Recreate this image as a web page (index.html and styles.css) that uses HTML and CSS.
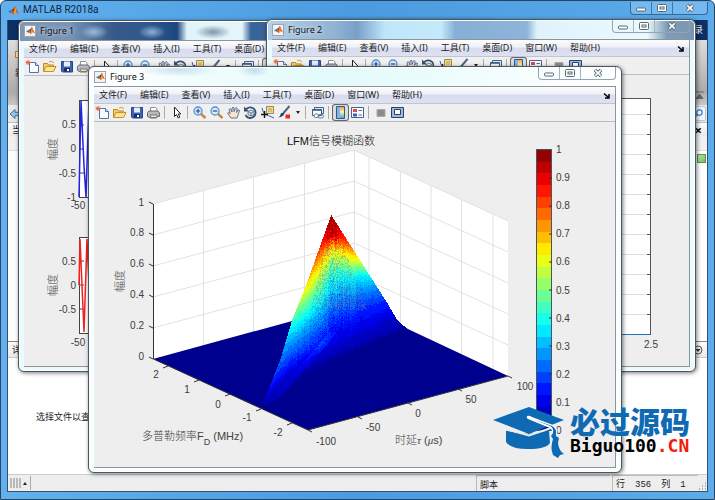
FILE: index.html
```html
<!DOCTYPE html>
<html lang="zh-CN">
<head>
<meta charset="utf-8">
<title>MATLAB R2018a</title>
<link rel="stylesheet" href="styles.css">
</head>
<body>
<svg class="defs" aria-hidden="true">
  <linearGradient id="jetbar" x1="0" y1="0" x2="0" y2="1"><stop offset="0" stop-color="#f39a5a"/><stop offset=".45" stop-color="#fff59a"/><stop offset="1" stop-color="#4aa3df"/></linearGradient>
  <symbol id="i-logo" viewBox="0 0 12 12"><path d="M0 7 4 5 6 7 3 9Z" fill="#3d7fb8"/><path d="M3 9 6 5 8 1 9 4 12 10 9 8 6 11 5 9Z" fill="#d9541e"/><path d="M4 5 6 4 8 1 6 7Z" fill="#6b3a3a"/><path d="M8 1 9 8 6 11Z" fill="#f7a12c"/></symbol>
  <symbol id="i-new" viewBox="0 0 15 15"><path d="M4.500 3.500h6l3 3v7h-9z" fill="#f8fbff" stroke="#4f74a8"/><path d="M10.500 3.500v3h3" fill="#cfe0f4" stroke="#4f74a8"/><path d="M3 1v5M.5 3.500h5M1.200 1.700l3.600 3.600M4.800 1.700 1.200 5.300" stroke="#e8603a"/></symbol>
  <symbol id="i-open" viewBox="0 0 15 15"><path d="M1.500 12.500v-8h4l1 1.500h5v2" fill="#f3cf6b" stroke="#b98a25"/><path d="M1.500 12.500 4 7.500h10l-2.500 5z" fill="#ffe48f" stroke="#c3922d"/><path d="M7 3q3-2 5 1" fill="none" stroke="#d99a2b"/></symbol>
  <symbol id="i-save" viewBox="0 0 15 15"><path d="M2.500 2.500h11v10.500h-10l-1-1z" fill="#3e62b4" stroke="#25458d"/><path d="M5 2.500h6v5H5z" fill="#e4edfb"/><path d="M5 9h6v3.500H5z" fill="#172e60"/><path d="M8 10h2v2H8z" fill="#fff"/></symbol>
  <symbol id="i-print" viewBox="0 0 15 15"><path d="M4.500 7V2.500h5L11 4v3" fill="#fff" stroke="#8b8f98"/><path d="M1.500 7.500 3 6h9l1.500 2v3.500h-3V13h-6l-3-1.500z" fill="#b7bac3" stroke="#686d78"/><path d="M4 10h7v2.500H5z" fill="#f6e7b5" stroke="#777"/></symbol>
  <symbol id="i-ptr" viewBox="0 0 15 15"><path d="M5.500 2v9.500l2-2 1.700 3.500 1.600-.8L9.200 9h2.500z" fill="#fff" stroke="#222"/></symbol>
  <symbol id="i-zin" viewBox="0 0 15 15"><path d="m8 8 5.500 5" stroke="#c08a45" stroke-width="2.400"/><circle cx="6" cy="6" r="4" fill="#d6eafb" stroke="#5a93cc" stroke-width="1.300"/><path d="M6 3.800v4.400M3.800 6h4.400" stroke="#1c4c96" stroke-width="1.200"/></symbol>
  <symbol id="i-zout" viewBox="0 0 15 15"><path d="m8 8 5.500 5" stroke="#c08a45" stroke-width="2.400"/><circle cx="6" cy="6" r="4" fill="#d6eafb" stroke="#5a93cc" stroke-width="1.300"/><path d="M3.800 6h4.400" stroke="#1c4c96" stroke-width="1.200"/></symbol>
  <symbol id="i-pan" viewBox="0 0 15 15"><path d="M5 13 1.500 8.200q1-1.500 2.700.4L3 4.500q1-1.500 2 0L6 7V3q1-1.500 2 0v3.600L9.500 3q1.400-1 1.700.5L10.500 7.500 12 5q1.600-.5 1.400 1L11 13z" fill="#fbe3c6" stroke="#4b679c" stroke-width=".9"/></symbol>
  <symbol id="i-rot" viewBox="0 0 15 15"><path d="M3 4.500A5.300 5.300 0 1 1 2.500 10" fill="none" stroke="#36516f" stroke-width="1.800"/><path d="M1 1.500v5h5z" fill="#36516f"/><path d="M5 6.500 8 5l3 1.500v3L8 11 5 9.500zM5 6.500 8 8l3-1.500M8 8v3" fill="#d9e4ef" stroke="#57728e" stroke-width=".9"/></symbol>
  <symbol id="i-cur" viewBox="0 0 15 15"><path d="M6.500 1.500h7v7h-7z" fill="#f3dc92" stroke="#9b8748"/><path d="M8 4h4M8 6h4" stroke="#b6a063"/><path d="M2 3q1 5 3 6t9 4" fill="none" stroke="#3c52e0"/><path d="M4.500 6v7M1 9.500h7" stroke="#111" stroke-width="1.400"/></symbol>
  <symbol id="i-brush" viewBox="0 0 15 15"><path d="m12.500 1-6 7" stroke="#4b6787" stroke-width="2"/><path d="M7.500 7.500Q7 12 1 12.500q2.500-1 2.500-3T7.500 7.500" fill="#29445f"/><path d="M8.500 9.500h4.500v4H8.500z" fill="#fa2414"/></symbol>
  <symbol id="i-link" viewBox="0 0 15 15"><path d="M4.500 2.500h9v6h-9z" fill="#e4edf6" stroke="#3e5f86"/><path d="M2.500 4.500h9v6h-9z" fill="#f7fafd" stroke="#3e5f86"/><path d="M2.500 5h9" stroke="#3e5f86" stroke-width="1.600"/><rect x="4" y="9" width="5" height="3.500" rx="1.700" fill="#fff" stroke="#61798f"/><rect x="8" y="9.500" width="5.500" height="3.500" rx="1.700" fill="none" stroke="#61798f"/></symbol>
  <symbol id="i-cbar" viewBox="0 0 15 15"><path d="M3.500 1.500h8v12h-8z" fill="#fff" stroke="#2f598c"/><path d="M4 2h3v11H4z" fill="#83b6e3"/><path d="M7 2h4v11H7z" fill="url(#jetbar)"/></symbol>
  <symbol id="i-leg" viewBox="0 0 15 15"><path d="M1.500 2.500h12v10h-12z" fill="#f8faff" stroke="#48638d"/><path d="M3 4h4v3H3z" fill="#e34a3e"/><path d="M3 8.500h4v3H3z" fill="#4058c9"/><path d="M8.500 5.500H12M8.500 10H12" stroke="#5c6e86"/></symbol>
  <symbol id="i-hide" viewBox="0 0 15 15"><path d="M4 4.500h8v7H4z" fill="#8c8c8c" stroke="#a9a9a9"/></symbol>
  <symbol id="i-show" viewBox="0 0 15 15"><path d="M1.500 2.500h12v10h-12z" fill="#9db9db" stroke="#26436e"/><path d="M4.500 4.500h6v5h-6z" fill="#fff" stroke="#26436e"/></symbol>
  <symbol id="w-min" viewBox="0 0 14 10"><rect x="2.500" y="5" width="9" height="3" rx="1" fill="#fff" stroke="#596773"/></symbol>
  <symbol id="w-max" viewBox="0 0 14 10"><rect x="2.500" y="1.500" width="9" height="7" rx="1" fill="#fff" stroke="#596773"/><rect x="5" y="4" width="4" height="2" fill="#fff" stroke="#596773"/></symbol>
  <symbol id="w-close" viewBox="0 0 14 10"><path d="m4 2 6 6M10 2 4 8" stroke="#596773" stroke-width="3.500"/><path d="m4.300 2.300 5.400 5.400M9.700 2.300 4.300 7.700" stroke="#fff" stroke-width="1.700"/></symbol>
</svg>

<template id="window-controls">
  <div class="controls">
    <button aria-label="最小化"><svg><use href="#w-min"/></svg></button>
    <button aria-label="最大化"><svg><use href="#w-max"/></svg></button>
    <button class="close" aria-label="关闭"><svg><use href="#w-close"/></svg></button>
  </div>
</template>

<template id="figure-bars">
  <nav class="menubar">
    <button>文件(F)</button><button>编辑(E)</button><button>查看(V)</button><button>插入(I)</button><button>工具(T)</button><button>桌面(D)</button><button>窗口(W)</button><button>帮助(H)</button>
    <svg class="dock" viewBox="0 0 7 7"><path d="M1 1.500 5 5M6 2v4H2" fill="none" stroke="#000" stroke-width="1.500"/></svg>
  </nav>
  <div class="toolbar">
    <button aria-label="新建"><svg><use href="#i-new"/></svg></button>
    <button aria-label="打开"><svg><use href="#i-open"/></svg></button>
    <button aria-label="保存"><svg><use href="#i-save"/></svg></button>
    <button aria-label="打印"><svg><use href="#i-print"/></svg></button>
    <i></i>
    <button aria-label="编辑绘图"><svg><use href="#i-ptr"/></svg></button>
    <i></i>
    <button aria-label="放大"><svg><use href="#i-zin"/></svg></button>
    <button aria-label="缩小"><svg><use href="#i-zout"/></svg></button>
    <button aria-label="平移"><svg><use href="#i-pan"/></svg></button>
    <button aria-label="旋转"><svg><use href="#i-rot"/></svg></button>
    <button aria-label="数据游标"><svg><use href="#i-cur"/></svg></button>
    <button aria-label="刷亮"><svg><use href="#i-brush"/></svg></button>
    <button class="drop" aria-label="刷亮选项"></button>
    <i></i>
    <button aria-label="链接"><svg><use href="#i-link"/></svg></button>
    <i></i>
    <button class="pressed" aria-label="颜色栏"><svg><use href="#i-cbar"/></svg></button>
    <button aria-label="图例"><svg><use href="#i-leg"/></svg></button>
    <i></i>
    <button aria-label="隐藏绘图工具"><svg><use href="#i-hide"/></svg></button>
    <button aria-label="显示绘图工具"><svg><use href="#i-show"/></svg></button>
  </div>
</template>

<div class="app">
  <header class="app-title"><svg class="logo"><use href="#i-logo"/></svg><h1>MATLAB R2018a</h1><span data-controls></span></header>
  <main class="app-body">
    <div class="tabs"><span>登录</span></div>
    <div class="ribbon">
      <div class="ribbon-item"><span class="ribbon-icon"></span><span>新建</span></div>
      <svg class="collapse" viewBox="0 0 9 9"><path d="M0 1h9M1 7.500 4.500 3 8 7.500z" fill="#666" stroke="#666"/></svg>
    </div>
    <div class="address">
      <svg class="back" viewBox="0 0 12 12"><path d="M1 6 6 1.500v2.800h6v3.400H6v2.800z" fill="#9cc6e8" stroke="#39749f"/></svg>
      <button class="search" aria-label="搜索"><svg viewBox="0 0 10 10"><circle cx="6" cy="4" r="3" fill="#fff" stroke="#2a7bd0" stroke-width="1.300"/><path d="M4 6 1 9" stroke="#2a7bd0" stroke-width="1.500"/></svg></button>
    </div>
    <div class="panel-head"><span>当前文件夹</span><b>×</b></div>
    <div class="files"><span class="column"></span><span class="ok"></span></div>
    <div class="panel-head details"><span>详细信息</span><svg viewBox="0 0 10 10"><circle cx="5" cy="5" r="4" fill="#eee" stroke="#555"/><path d="M2.500 4h5L5 7z" fill="#333"/></svg></div>
    <div class="preview">选择文件以查看详细信息</div>
    <footer class="status">
      <svg class="grip" viewBox="0 0 20 12"><path d="M1 1v10M4 1v10M7 1v10M10 1v10" stroke="#a9a9a9" stroke-width="1.500"/><path d="m13 8 2-3 2 3z" fill="#222"/></svg>
      <span class="mode">脚本</span>
      <span class="caret"><span>行</span><span>356</span><span>列</span><span>1</span></span>
      <svg class="corner" viewBox="0 0 9 9"><path d="M7 1h1M7 4h1M7 7h1M4 4h1M4 7h1M1 7h1" stroke="#999" stroke-width="1.500"/></svg>
    </footer>
  </main>
</div>

<section class="figure fig1">
  <header class="fig-title"><span class="badge"><svg class="logo"><use href="#i-logo"/></svg></span><h2>Figure 1</h2></header>
  <div class="client" data-bars>
    <svg class="plot" viewBox="0 0 464 292">
      <rect x="55.500" y="24.500" width="360" height="97" fill="#fff" stroke="#444"/>
      <path d="M56 49h4M56 73h4M56 97h4" stroke="#444"/>
      <path d="M55 121 57 25 60 90 62 121 65 25 67 60 70 121" fill="none" stroke="#2222e8" stroke-width="1.500"/>
      <g class="tick end"><text x="52" y="52">0.5</text><text x="52" y="76">0</text><text x="52" y="101">-0.5</text><text x="52" y="125">-1</text></g>
      <text class="tick mid" x="54" y="133">-50</text>
      <text class="axis mid" transform="translate(33 73) rotate(-90)">幅度</text>
      <rect x="55.500" y="161.500" width="360" height="96" fill="#fff" stroke="#444"/>
      <path d="M56 185h4M56 209h4M56 233h4" stroke="#444"/>
      <path d="M55 209 56 163 60 256 63 163 67 256" fill="none" stroke="#f42020" stroke-width="1.500"/>
      <g class="tick end"><text x="52" y="189">0.5</text><text x="52" y="213">0</text><text x="52" y="237">-0.5</text></g>
      <text class="tick mid" x="54" y="270">-50</text>
      <text class="axis mid" transform="translate(33 209) rotate(-90)">幅度</text>
    </svg>
  </div>
</section>

<section class="figure fig2">
  <header class="fig-title"><span class="badge"><svg class="logo"><use href="#i-logo"/></svg></span><h2>Figure 2</h2><span data-controls></span></header>
  <div class="client" data-bars>
    <svg class="plot" viewBox="0 -1 417 292">
      <rect x="55.500" y="22.500" width="323" height="236" fill="#fff" stroke="#555"/>
      <path d="M56 38.500h322M56 58.500h322M56 78.500h322M56 98.500h322M56 118.500h322M56 138.500h322M56 158.500h322M56 178.500h322M56 198.500h322M56 218.500h322M56 238.500h322" stroke="#dedede"/>
      <path d="M375 38.500h4M375 58.500h4M375 78.500h4M375 98.500h4M375 118.500h4M375 138.500h4M375 158.500h4M375 178.500h4M375 198.500h4M375 218.500h4M375 238.500h4" stroke="#555"/>
      <path d="M56 258.500h322" stroke="#1874c8"/>
      <text class="tick mid" x="379" y="272">2.5</text>
    </svg>
  </div>
</section>

<section class="figure fig3">
  <header class="fig-title"><span class="badge"><svg class="logo"><use href="#i-logo"/></svg></span><h2>Figure 3</h2><span data-controls></span></header>
  <div class="client" data-bars>
    <svg class="plot" viewBox="94 122 521 345">
      <text class="heading mid" x="331" y="145">LFM信号模糊函数</text>
      <path d="M153 204 354 150 508 221V376L354 305 153 359Z" fill="#fff"/>
      <path d="M153 204 354 150 508 221M153 235 354 181 508 252M153 266 354 212 508 283M153 297 354 243 508 314M153 328 354 274 508 345M203.500 191V345M253.500 177V332M304.500 163V318M354.500 150V305M369 157V312M400.500 171V326M431 186V340M461.500 200V354M493 214V369" fill="none" stroke="#e2e2e2"/>
      <path d="M153 359 303 318 354 305 393 318 402 326 410 330 508 376 308 430Z" fill="#00008f"/>
      <g id="surface" shape-rendering="crispEdges"></g>
      <path d="M153.500 204V359L308 430 508 376" fill="none" stroke="#333"/>
      <path d="M149 202l4 2M149 233l4 2M149 264l4 2M149 295l4 2M149 326l4 2M149 357l4 2M168 366l-5 2M199 380l-5 2M230 394l-5 2M261 409l-5 2M292 423l-5 2M308 430l4 2M358 417l4 2M408 403l4 2M458 389l4 2M508 376l4 2" stroke="#333"/>
      <g class="tick end"><text x="144" y="206">1</text><text x="144" y="236">0.8</text><text x="144" y="267">0.6</text><text x="144" y="298">0.4</text><text x="144" y="329">0.2</text><text x="144" y="360">0</text></g>
      <g class="tick mid"><text x="156" y="378">2</text><text x="187" y="393">1</text><text x="218" y="408">0</text><text x="247" y="421">-1</text><text x="278" y="436">-2</text><text x="326" y="445">-100</text><text x="373" y="431">-50</text><text x="418" y="417">0</text><text x="471" y="403">50</text><text x="525" y="390">100</text></g>
      <text class="axis mid" transform="translate(124 281) rotate(-90)">幅度</text>
      <text class="axis" x="142" y="440">多普勒频率<tspan>F</tspan><tspan class="sub" dy="5">D</tspan><tspan dy="-5"> (MHz)</tspan></text>
      <text class="axis" x="395" y="444">时延<tspan class="greek">τ</tspan> (<tspan class="greek">μ</tspan>s)</text>
      <g id="colorbar" shape-rendering="crispEdges"></g>
      <rect x="536.500" y="149.500" width="15" height="281" fill="none" stroke="#4b5560"/>
      <path d="M549 178h3M549 206h3M549 234h3M549 262h3M549 290h3M549 318h3M549 346h3M549 374h3M549 402h3" stroke="#333"/>
      <g class="tick"><text x="556" y="153">1</text><text x="556" y="181">0.9</text><text x="556" y="209">0.8</text><text x="556" y="237">0.7</text><text x="556" y="265">0.6</text><text x="556" y="294">0.5</text><text x="556" y="322">0.4</text><text x="556" y="350">0.3</text><text x="556" y="378">0.2</text><text x="556" y="406">0.1</text><text x="556" y="434">0</text></g>
    </svg>
  </div>
</section>

<aside class="brand">
  <svg viewBox="0 0 72 52"><path d="M13 23.500Q34 30 56 23l1 13q-4 6-22 6-17 0-22-7z" fill="#0f6ab4"/><path d="M0 13 36 0 71 13 36 27Z" fill="#0f6ab4"/><path d="M12 22 36 28.500 58 21" fill="none" stroke="#eee" stroke-width="2"/><path d="M34 9q2-1 5 1l21 8q5 2 4 10l-2 2-3-1q1-6-2-8L35 12q-2-1-1-3" fill="#fff"/><path d="M40 12 59 19q5 2 4 10l3 2-1 5q1 8 6 11l-4 1-2 3-5-3q-3-7 0-16l-2-3 2-3q1-5-3-7z" fill="#0f6ab4"/></svg>
  <div><strong>必过源码</strong><p>Biguo100<em>.CN</em></p></div>
</aside>
<script src="app.js"></script>
</body>
</html>
```
FILE: styles.css
```css
* { box-sizing: border-box; }
body { margin: 0; min-height: 100vh; position: relative; overflow: hidden; font: 9px/12px "Noto Sans", "Noto Sans CJK SC", sans-serif; color: #222; }
h1, h2, p { margin: 0; font-weight: 400; }
button { padding: 0; margin: 0; border: 0; background: none; font: inherit; color: inherit; }
svg { display: block; }
.defs { position: absolute; width: 0; height: 0; }

.app { min-height: 100vh; display: flex; flex-direction: column; padding: 1px 6px 7px; background: linear-gradient(90deg, #62b1ee, #4a9be0 50%, #5cabea); border: 1px solid #27435f; border-radius: 6px 6px 0 0; }
.app-title { height: 18px; display: flex; align-items: center; gap: 4px; padding: 0 0 2px 1px; }
.app-title h1 { flex: 1; font-size: 10px; font-family: Roboto, sans-serif; color: #10243a; }
.logo { width: 11px; height: 11px; }
.controls { display: flex; align-self: flex-start; height: 13px; border: 1px solid #91a5b4; border-top: 0; border-radius: 0 0 4px 4px; }
.controls button { width: 21px; display: flex; align-items: center; justify-content: center; border-right: 1px solid #a5b6c3; }
.controls .close { width: 34px; border: 0; }
.controls svg { width: 14px; height: 10px; }
.app .controls { border-color: #2f699c; background: #76b9ee; }
.app .controls button { border-color: #3b78ac; }
[data-controls] { align-self: flex-start; }

.app-body { flex: 1; display: flex; flex-direction: column; background: #fff; border: 1px solid #35506c; border-top: 0; }
.tabs { height: 20px; background: #0c2f66; color: #fff; display: flex; justify-content: flex-end; align-items: center; padding-right: 4px; }
.ribbon { height: 65px; display: flex; justify-content: space-between; align-items: flex-end; padding: 3px 3px 5px 7px; background: linear-gradient(#dedede, #ababab 80%, #c8c8c8); }
.ribbon-item { align-self: flex-start; margin-top: 8px; display: flex; flex-direction: column; gap: 9px; }
.ribbon-icon { width: 10px; height: 7px; border: 1px solid #c9792a; background: #f3dfb6; }
.collapse { width: 9px; height: 9px; }
.address { height: 17px; display: flex; justify-content: space-between; align-items: center; padding: 0 1px; background: #e9e9e9; }
.back { width: 12px; height: 12px; }
.search { width: 16px; height: 15px; display: flex; align-items: center; justify-content: center; border: 1px solid #b7c9dd; border-radius: 2px; background: #eef5fd; }
.search svg { width: 9px; height: 9px; }
.panel-head { height: 14px; display: flex; align-items: center; justify-content: space-between; padding: 0 5px 0 4px; background: linear-gradient(#fdfdfd, #e9e9e9); border-top: 1px solid #bbb; }
.panel-head b { font-size: 13px; color: #000; }
.files { flex: 1; display: flex; flex-direction: column; align-items: flex-end; gap: 3px; }
.column { width: 100%; height: 15px; background: #f1f1f1; border-bottom: 1px solid #ddd; }
.ok { width: 9px; height: 9px; margin-right: 1px; border: 1px solid #6b8a5c; background: linear-gradient(135deg, #b7e6a5, #6cc35b); }
.details { height: 16px; padding-right: 4px; border-top: 1px solid #888; }
.details svg { width: 10px; height: 10px; }
.preview { height: 117px; padding: 53px 0 0 28px; border-top: 1px solid #ccc; }
.status { height: 17px; display: flex; align-items: stretch; background: #eee; border-top: 1px solid #ccc; }
.grip { width: 23px; height: 14px; margin-top: 1px; padding-left: 2px; border-right: 1px solid #aaa; }
.mode { margin-left: auto; width: 134px; border: 1px solid #bbb; border-width: 1px 0 0 1px; padding: 3px 0 0 3px; }
.caret { width: 86px; margin-left: 2px; padding: 3px 0 0 3px; display: flex; gap: 10px; border: 1px solid #bbb; border-width: 1px 0 0 1px; font-family: "Liberation Mono", "Noto Sans CJK SC", monospace; }
.corner { width: 9px; height: 9px; align-self: flex-end; }

.figure { position: absolute; display: flex; flex-direction: column; padding: 0 5px 4px; border: 1px solid #4c565e; border-radius: 6px; background: #eafafd; box-shadow: inset 0 0 0 1px #fff, 1px 1px 4px #0008; }
.fig1 { top: 20px; left: 18px; right: 220px; bottom: 128px; background: radial-gradient(14px 7px at 75px 11px, #9cbcdc, transparent), radial-gradient(14px 7px at 133px 11px, #8fb0d4, transparent), radial-gradient(18px 7px at 194px 11px, #8296a5, transparent) , linear-gradient(90deg, #7e96b2 0, #7795b8 50px, #36598a 95px, #2f588c 130px, #1d4580 158px, #dff4fb 168px, #e4f6fb 223px, #38649a 232px) top / 100% 20px no-repeat, #eafafd; }
.fig2 { top: 19px; left: 266px; right: 19px; bottom: 128px; background: linear-gradient(90deg, #b6d1e8 0, #8fb2d3 70px, #789fc8 90px, #bee6fa 118px, #c4e9fa 174px, #87afd6 188px, #8db4d9 260px, #dff2fc 270px, #eafaff 380px, #7f9db8 400px, #7895b1) top / 100% 20px no-repeat, #eafafd; }
.fig3 { top: 66px; left: 88px; right: 93px; bottom: 27px; background: radial-gradient(16px 7px at 165px 3px, #bfdcec, transparent), radial-gradient(40px 7px at 90px 3px, #c9e3ee, transparent), linear-gradient(90deg, #fff, #e2fafa 45%, #f2fdfd 75%, #fff) top / 100% 21px no-repeat, #f8ffff; }
.fig-title { height: 19px; flex: none; display: flex; align-items: center; gap: 4px; }
.fig-title h2 { flex: 1; font-size: 9px; color: #111; text-shadow: 0 0 4px #fff; }
.badge { width: 12px; height: 12px; display: flex; align-items: center; justify-content: center; background: #f3f3f3; border: 1px solid #9aa7b2; }
.badge .logo { width: 9px; height: 9px; }
.client { flex: 1; min-height: 0; display: flex; flex-direction: column; background: #eee; border: 1px solid #8e9498; border-width: 1px 1px 1px 0; }
.menubar { height: 17px; flex: none; display: flex; align-items: center; gap: 13px; padding: 0 5px; background: linear-gradient(#fdfdfe, #edf0f8 45%, #d8dcee 50%, #dde2f2); border-bottom: 1px solid #c2c5ce; overflow: hidden; }
.menubar button { flex: none; white-space: nowrap; }
.dock { width: 7px; height: 7px; margin-left: auto; flex: none; }
.toolbar { height: 18px; flex: none; display: flex; align-items: center; gap: 2px; padding-left: 1px; border-bottom: 1px solid #bbb; background: #f0f0f0; overflow: hidden; }
.toolbar button { width: 15px; height: 15px; flex: none; }
.toolbar svg { width: 15px; height: 15px; }
.toolbar i { width: 1px; height: 13px; margin: 0 2px 0 1px; background: #aaa; flex: none; }
.toolbar .drop { width: 8px; display: flex; align-items: center; justify-content: center; }
.drop::after { content: ""; border: 2px solid transparent; border-top: 3px solid #222; border-bottom: 0; }
.toolbar .pressed { border-radius: 2px; background: #dcdcdc; box-shadow: 0 0 0 1px #666; }
.plot { flex: 1; min-height: 0; width: 100%; }
.fig1 .plot, .fig2 .plot { flex: none; height: auto; overflow: visible; }

.tick { font: 10px "Liberation Sans", sans-serif; fill: #3c3c3c; }
.axis { font: 300 11px "Liberation Sans", "Noto Sans CJK SC", sans-serif; fill: #444; }
.heading { font: 300 11px "Liberation Sans", "Noto Sans CJK SC", sans-serif; fill: #111; }
.end { text-anchor: end; }
.mid { text-anchor: middle; }
.sub { font-size: 9px; }
.greek { font-family: "Liberation Serif", serif; font-style: italic; }

.brand { position: absolute; left: 493px; top: 404px; display: flex; gap: 5px; }
.brand > svg { width: 72px; height: 52px; margin-top: 3px; }
.brand strong { display: block; font: 900 30px/32px "Noto Sans CJK SC", sans-serif; color: #0f6ab4; white-space: nowrap; }
.brand p { font: bold 18px/20px "DejaVu Sans Mono", monospace; color: #000; }
.brand em { font-style: normal; color: #f51a0a; }
```
FILE: app.js
```js
document.querySelectorAll('[data-controls]').forEach(el =>
  el.append(document.getElementById('window-controls').content.cloneNode(true)));
document.querySelectorAll('[data-bars]').forEach(el =>
  el.prepend(document.getElementById('figure-bars').content.cloneNode(true)));

const LEVELS = 24;
const channel = (v, c) => Math.round(255 * Math.max(0, Math.min(1, 1.5 - Math.abs(4 * v - c))));
const jet = v => `rgb(${channel(v, 3)},${channel(v, 2)},${channel(v, 1)})`;
const shade = i => jet((i + 0.5) / LEVELS);
const addShape = (parent, name, attrs) => {
  const el = document.createElementNS('http://www.w3.org/2000/svg', name);
  for (const key in attrs) el.setAttribute(key, attrs[key]);
  parent.append(el);
};

const bar = document.getElementById('colorbar');
for (let i = 0; i < LEVELS; i++) {
  const top = Math.round(430 - 280 * (i + 1) / LEVELS);
  addShape(bar, 'rect', { x: 537, y: top, width: 14, height: Math.round(430 - 280 * i / LEVELS) - top, fill: shade(i) });
}

// Piecewise linear lookup in a list of [position, value] pairs.
const lookup = (table, p) => {
  if (p <= table[0][0]) return table[0][1];
  for (let i = 1; i < table.length; i++) {
    const [a, va] = table[i - 1], [b, vb] = table[i];
    if (p <= b) return va + (vb - va) * (p - a) / (b - a);
  }
  return table[table.length - 1][1];
};
const leftEdge = [[215, 331], [285, 306], [320, 292], [360, 280], [405, 262]];
const rightEdge = [[215, 331], [262, 361], [303, 387], [320, 397], [326, 404], [330, 408], [356, 345], [405, 265]];
const leftValue = [[215, .99], [250, .82], [290, .62], [325, .4], [345, .28], [385, .13], [405, .04]];
const midValue = [[215, .99], [236, .92], [243, .78], [252, .6], [265, .48], [275, .4], [300, .26], [330, .13], [340, .1], [375, .04]];
const rightValue = [[215, .99], [240, .82], [252, .7], [262, .58], [275, .37], [290, .24], [303, .15], [320, .06], [330, .02]];

// Seeded noise keeps the surface identical on every load.
let seed = 7;
const random = () => (seed = (seed * 16807) % 2147483647) / 2147483647 - 0.5;
const streaks = Array.from({ length: 160 }, random);
const runs = Array.from({ length: LEVELS }, () => '');
let muted = '';
for (let y = 215; y < 406; y++) {
  const left = lookup(leftEdge, y), right = lookup(rightEdge, y);
  const middle = Math.min(331, (left + right) / 2 + Math.max(0, 360 - y) / 4);
  for (let x = Math.round(left); x <= right; x++) {
    const inLeft = x < middle;
    const t = inLeft ? (x - left) / (middle - left || 1) : (x - middle) / (right - middle || 1);
    let v = inLeft
      ? lookup(leftValue, y) * (1 - t) + lookup(midValue, y) * t
      : lookup(midValue, y) * (1 - t) + lookup(rightValue, y) * t;
    const core = inLeft ? t : 1 - t;
    const height = Math.min(1, v * 2.2);
    v += (streaks[x - 255] * 0.1 + random() * 0.15) * core * height + random() * 0.02;
    const ridge = Math.abs((x - 298) * 37 + (y - 372) * 32) / 49;
    if (y > 332 && x < 336 && ridge < 3) v += 0.04;
    const level = Math.max(0, Math.min(LEVELS - 1, Math.floor(v * LEVELS)));
    const cell = `M${x} ${y}h1v1h-1z`;
    runs[level] += cell;
    if (y > 245 && y < 310 && core > 0.4 && random() > 0.2) muted += cell;
  }
}
const surface = document.getElementById('surface');
runs.forEach((d, i) => addShape(surface, 'path', { d, fill: shade(i) }));
addShape(surface, 'path', { d: muted, fill: '#808080', opacity: 0.4 });
```
